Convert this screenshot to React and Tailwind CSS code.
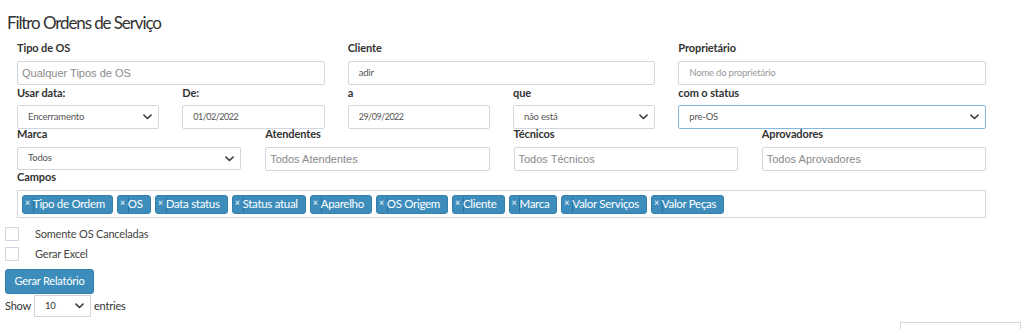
import React from "react";

const F = { fontFamily: "Lato, 'Open Sans', sans-serif" };
const A = { fontFamily: "'Liberation Sans', Arial, sans-serif" };

function Chevron() {
  return (
    <svg width="9" height="6" viewBox="0 0 9 6" className="shrink-0">
      <path d="M1 1.2 L4.5 4.5 L8 1.2" fill="none" stroke="#444" strokeWidth="1.7" strokeLinecap="round" strokeLinejoin="round" />
    </svg>
  );
}

function Label({ children, className = "" }) {
  return <div className={"text-[11px] tracking-[-0.1px] font-bold text-[#333] leading-[16px] " + className}>{children}</div>;
}

function Input({ text, placeholder, arial, narrow, h = "h-[24px]" }) {
  return (
    <div className={"border border-[#d2d6de] rounded-[2px] bg-white flex items-center " + (arial ? "px-[4px] " : "px-[10px] ") + h}>
      {arial ? (
        <span style={A} className="text-[11px] text-[#8a8a8a]">{placeholder}</span>
      ) : narrow ? (
        <span className="text-[9px] tracking-[-0.5px] text-[#555]">{text}</span>
      ) : (
        <span className={"text-[9.5px] tracking-[-0.2px] " + (placeholder ? "text-[#999]" : "text-[#555]")}>{text || placeholder}</span>
      )}
    </div>
  );
}

function Select({ text, blue, h = "h-[24px]" }) {
  return (
    <div className={"border rounded-[2px] bg-white flex items-center justify-between pl-[10px] pr-[6px] " + h + " " + (blue ? "border-[#86b7dd]" : "border-[#d2d6de]")}>
      <span className="text-[9.5px] tracking-[-0.2px] text-[#555]">{text}</span>
      <Chevron />
    </div>
  );
}

function Tag({ children }) {
  return (
    <div className="h-[19px] bg-[#3c8dbc] border border-[#367fa9] rounded-[3px] flex items-center pl-[2px] pr-[7px] text-white text-[11.5px] tracking-[-0.3px] leading-none">
      <span className="text-[9px] mr-[3px] -mt-[3px]">×</span>
      <span className="w-px h-[15px] bg-[#2a6d95] mr-[-1px]"></span>
      <span>{children}</span>
    </div>
  );
}

export default function App() {
  const tags = ["Tipo de Ordem", "OS", "Data status", "Status atual", "Aparelho", "OS Origem", "Cliente", "Marca", "Valor Serviços", "Valor Peças"];
  return (
    <div style={F} className="w-[1024px] h-[329px] bg-white overflow-hidden relative text-[#333]">
      <div className="pl-[7px] pt-[10px] text-[17px] tracking-[-1.1px] leading-[25px] text-[#333]">Filtro Ordens de Serviço</div>

      <div className="px-[17px] mt-[5px] w-[1003px]">
        <div className="grid grid-cols-3 gap-x-[23px]">
          {[
            ["Tipo de OS", <Input arial placeholder="Qualquer Tipos de OS" />],
            ["Cliente", <Input text="adir" />],
            ["Proprietário", <Input placeholder="Nome do proprietário" />],
          ].map(([l, el], i) => (
            <div key={i}>
              <Label className="mb-[5px]">{l}</Label>
              {el}
            </div>
          ))}
        </div>

        <div className="grid grid-cols-6 gap-x-[23px]">
          {[
            ["Usar data:", <Select text="Encerramento" />, ""],
            ["De:", <Input narrow text="01/02/2022" />, ""],
            ["a", <Input narrow text="29/09/2022" />, ""],
            ["que", <Select text="não está" />, ""],
            ["com o status", <Select blue text="pre-OS" />, "col-span-2"],
          ].map(([l, el, c], i) => (
            <div key={i} className={c}>
              <Label className="mb-[4px]">{l}</Label>
              {el}
            </div>
          ))}
        </div>

        <div className="grid grid-cols-4 gap-x-[24px] -mt-[3px]">
          {[
            ["Marca", <Select text="Todos" h="h-[23px]" />],
            ["Atendentes", <Input arial placeholder="Todos Atendentes" />],
            ["Técnicos", <Input arial placeholder="Todos Técnicos" />],
            ["Aprovadores", <Input arial placeholder="Todos Aprovadores" />],
          ].map(([l, el], i) => (
            <div key={i}>
              <Label className="mb-[5px]">{l}</Label>
              {el}
            </div>
          ))}
        </div>

        <Label className="-mt-[2px] mb-[5px]">Campos</Label>
        <div className="h-[28px] border border-[#d2d6de] flex items-center gap-[4px] pl-[4px]">
          {tags.map((t) => (
            <Tag key={t}>{t}</Tag>
          ))}
        </div>
      </div>

      <div className="pl-[5px] mt-[9px] text-[11px] tracking-[-0.2px]">
        <div className="flex items-center h-[14px]">
          <div className="w-[14px] h-[14px] border border-[#d2d6de] bg-white"></div>
          <span className="ml-[16px] text-[#444]">Somente OS Canceladas</span>
        </div>
        <div className="flex items-center h-[14px] mt-[6px]">
          <div className="w-[14px] h-[14px] border border-[#d2d6de] bg-white"></div>
          <span className="ml-[16px] text-[#444]">Gerar Excel</span>
        </div>
        <div className="mt-[8px] w-[89px] h-[25px] bg-[#3c8dbc] border border-[#367fa9] rounded-[3px] flex items-center justify-center text-white">
          Gerar Relatório
        </div>
        <div className="flex items-center h-[22px] mt-px">
          <span className="text-[#333]">Show</span>
          <div className="ml-[3px] w-[57px] h-[22px] border border-[#d2d6de] bg-white flex items-center justify-between pl-[10px] pr-[6px]">
            <span className="text-[9.5px] text-[#333]">10</span>
            <Chevron />
          </div>
          <span className="ml-[3px] text-[#333]">entries</span>
        </div>
      </div>

      <div className="absolute left-[900px] top-[322px] w-[121px] h-[20px] border border-[#d2d6de] bg-white"></div>
    </div>
  );
}
